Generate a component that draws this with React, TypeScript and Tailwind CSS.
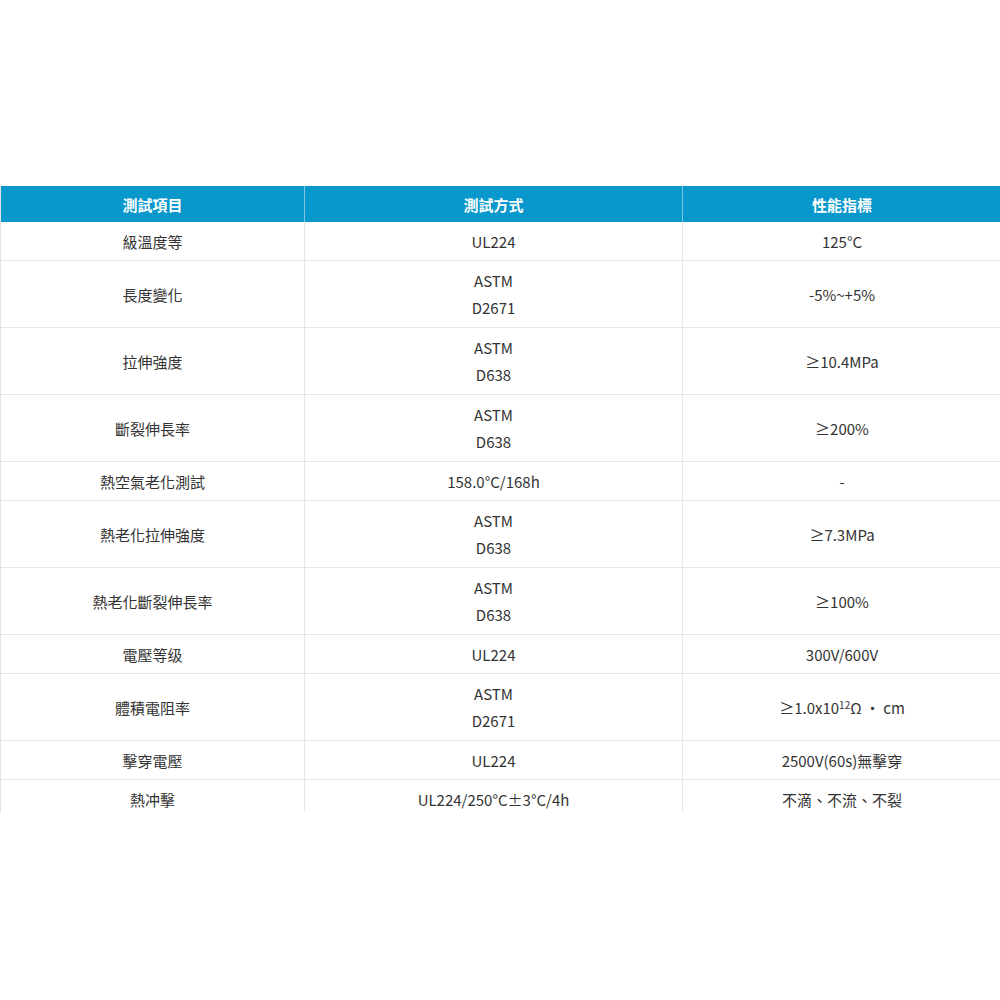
import React from "react";

type Row = { item: string; method: React.ReactNode; spec: React.ReactNode; tall?: boolean };

const rows: Row[] = [
  { item: "級溫度等", method: "UL224", spec: "125°C" },
  { item: "長度變化", method: <>ASTM<br />D2671</>, spec: "-5%~+5%", tall: true },
  { item: "拉伸強度", method: <>ASTM<br />D638</>, spec: "≥10.4MPa", tall: true },
  { item: "斷裂伸長率", method: <>ASTM<br />D638</>, spec: "≥200%", tall: true },
  { item: "熱空氣老化測試", method: "158.0°C/168h", spec: "-" },
  { item: "熱老化拉伸強度", method: <>ASTM<br />D638</>, spec: "≥7.3MPa", tall: true },
  { item: "熱老化斷裂伸長率", method: <>ASTM<br />D638</>, spec: "≥100%", tall: true },
  { item: "電壓等级", method: "UL224", spec: "300V/600V" },
  {
    item: "體積電阻率",
    method: <>ASTM<br />D2671</>,
    spec: <>≥1.0x10<sup className="text-[10px]">12</sup>Ω · cm</>,
    tall: true,
  },
  { item: "擊穿電壓", method: "UL224", spec: "2500V(60s)無擊穿" },
  { item: "熱冲擊", method: "UL224/250°C±3°C/4h", spec: "不滴、不流、不裂" },
];

const cell = "flex items-center justify-center text-center px-2 leading-[27px]";

export default function App() {
  return (
    <div className="w-[1000px] h-[1000px] bg-white font-['Noto_Sans_CJK_TC','Noto_Sans',sans-serif] text-[15px] text-[#333]">
      <div className="pt-[186px]">
        <div className="h-[626px] overflow-hidden border-l border-[#e3e3e3]">
          <div className="grid grid-cols-[304px_378px_318px] h-[36px] bg-[#0898cb] text-white font-bold">
            <div className={cell + " border-r border-[#7cc6e3]"}>測試項目</div>
            <div className={cell + " border-r border-[#7cc6e3]"}>測試方式</div>
            <div className={cell}>性能指標</div>
          </div>
          {rows.map((r, i) => (
            <div
              key={i}
              className={
                "grid grid-cols-[304px_378px_318px] border-b border-[#e6e6e6] " +
                (r.tall ? "h-[67px]" : "h-[39px]")
              }
            >
              <div className={cell + " border-r border-[#e6e6e6]"}>{r.item}</div>
              <div className={cell + " border-r border-[#e6e6e6]"}>
                <div>{r.method}</div>
              </div>
              <div className={cell}>
                <div>{r.spec}</div>
              </div>
            </div>
          ))}
        </div>
      </div>
    </div>
  );
}
